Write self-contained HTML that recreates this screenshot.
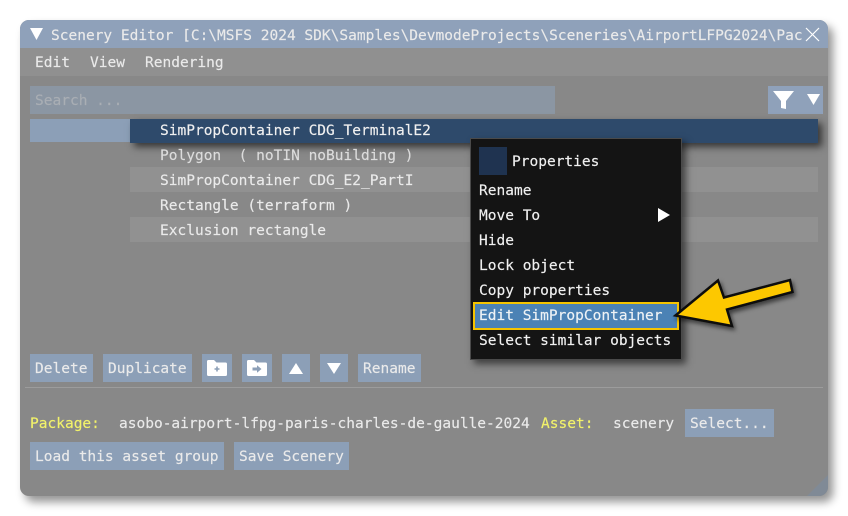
<!DOCTYPE html>
<html><head><meta charset="utf-8"><style>
html,body{margin:0;padding:0;background:#fff;width:848px;height:516px;overflow:hidden}
#r{position:relative;width:848px;height:516px;overflow:hidden;font-family:"DejaVu Sans Mono","Liberation Mono",monospace;font-size:14.52px;color:#eaeaea}
#r div{position:absolute;box-sizing:border-box}
.t{white-space:pre;height:20px;line-height:20px;margin-top:1px;-webkit-text-stroke:.15px currentColor}
.b{background:#8c9fb7;height:28px;top:354px}
svg{position:absolute;left:0;top:0}
</style></head><body><div id="r">
<div style="left:20px;top:20px;width:808px;height:476px;border-radius:9px;background:#888;box-shadow:5px 6px 9px rgba(0,0,0,.42);overflow:hidden">
<div style="left:0;top:0;width:808px;height:28px;background:#8fa1ba"></div>
<div style="left:0;top:28px;width:808px;height:28px;background:#909090"></div>
<div style="right:0;bottom:0;width:0;height:0;border-style:solid;border-width:0 0 21px 21px;border-color:transparent transparent #808a96 transparent"></div>
</div>
<div class="t" style="left:51px;top:25px;width:753px;overflow:hidden">Scenery Editor [C:\MSFS 2024 SDK\Samples\DevmodeProjects\Sceneries\AirportLFPG2024\Pac</div>
<div class="t" style="left:35px;top:52px">Edit</div>
<div class="t" style="left:90px;top:52px">View</div>
<div class="t" style="left:145px;top:52px">Rendering</div>
<div style="left:30px;top:86px;width:525px;height:28px;background:#8b96a3"></div>
<div class="t" style="left:35px;top:90px;color:#a9aeb4">Search ...</div>
<div style="left:768px;top:86px;width:55px;height:28px;background:#8fa1ba"></div>
<div style="left:30px;top:119px;width:100px;height:23px;background:#8c9fb7"></div>
<div style="left:130px;top:167px;width:688px;height:25px;background:#919191"></div>
<div style="left:130px;top:217px;width:688px;height:25px;background:#919191"></div>
<div style="left:130px;top:119px;width:688px;height:24px;background:#2e4a6b;box-shadow:4px 4px 7px rgba(0,0,0,.6)"></div>
<div class="t" style="left:160px;top:120px;color:#f0f0f0">SimPropContainer CDG_TerminalE2</div>
<div class="t" style="left:160px;top:145px;color:#dcdcdc">Polygon  ( noTIN noBuilding )</div>
<div class="t" style="left:160px;top:170px">SimPropContainer CDG_E2_PartI</div>
<div class="t" style="left:160px;top:195px">Rectangle (terraform )</div>
<div class="t" style="left:160px;top:220px">Exclusion rectangle</div>
<div class="b" style="left:30px;width:63px"></div>
<div class="t" style="left:35px;top:358px">Delete</div>
<div class="b" style="left:103px;width:89px"></div>
<div class="t" style="left:108px;top:358px">Duplicate</div>
<div class="b" style="left:202px;width:30px"></div>
<div class="b" style="left:242px;width:30px"></div>
<div class="b" style="left:282px;width:28px"></div>
<div class="b" style="left:320px;width:28px"></div>
<div class="b" style="left:358px;width:63px"></div>
<div class="t" style="left:363px;top:358px">Rename</div>
<div style="left:25px;top:387px;width:798px;height:1px;background:#9c9c9c"></div>
<div class="t" style="left:30px;top:413px;color:#f2f26a">Package:</div>
<div class="t" style="left:119px;top:413px">asobo-airport-lfpg-paris-charles-de-gaulle-2024</div>
<div class="t" style="left:541px;top:413px;color:#f2f26a">Asset:</div>
<div class="t" style="left:613px;top:413px">scenery</div>
<div class="b" style="left:685px;top:409px;width:89px"></div>
<div class="t" style="left:690px;top:413px">Select...</div>
<div class="b" style="left:30px;top:442px;width:194px"></div>
<div class="t" style="left:35px;top:446px">Load this asset group</div>
<div class="b" style="left:234px;top:442px;width:115px"></div>
<div class="t" style="left:239px;top:446px">Save Scenery</div>
<div style="left:470px;top:138px;width:212px;height:222px;background:#141414;border:1px solid #4a4a4a;box-shadow:4px 4px 7px rgba(0,0,0,.55)"></div>
<div style="left:479px;top:147px;width:28px;height:28px;background:#1f3350"></div>
<div class="t" style="left:512px;top:151px;color:#f0f0f0">Properties</div>
<div class="t" style="left:479px;top:180px;color:#f0f0f0">Rename</div>
<div class="t" style="left:479px;top:205px;color:#f0f0f0">Move To</div>
<div class="t" style="left:479px;top:230px;color:#f0f0f0">Hide</div>
<div class="t" style="left:479px;top:255px;color:#f0f0f0">Lock object</div>
<div class="t" style="left:479px;top:280px;color:#f0f0f0">Copy properties</div>
<div style="left:473px;top:302px;width:206px;height:28px;background:#4b82b5;border:2px solid #f5c400"></div>
<div class="t" style="left:479px;top:305px;color:#eef2f5">Edit SimPropContainer</div>
<div class="t" style="left:479px;top:330px;color:#f0f0f0">Select similar objects</div>
<svg width="848" height="516" viewBox="0 0 848 516">
<defs><filter id="s" x="-20%" y="-20%" width="150%" height="150%"><feDropShadow dx="2" dy="3" stdDeviation="2" flood-color="#000" flood-opacity=".55"/></filter></defs>
<path d="M30 28H43L36.500 40Z" fill="#fff"/>
<path d="M806 28L819 41M819 28L806 41" stroke="#fff" stroke-width="1.2" fill="none"/>
<path d="M773 91H794L786 101V109L781 108V101Z" fill="#fff"/>
<path d="M807 94H820L813.500 105Z" fill="#fff"/>
<path d="M658 208L670 215L658 222Z" fill="#fff"/>
<path d="M207 361.500Q207 360 208.500 360H214L216.500 362.500H225.500Q227 362.500 227 364V374.500Q227 376 225.500 376H208.500Q207 376 207 374.500Z" fill="#fff"/>
<path d="M214.500 369H219.500M217 366.500V371.500" stroke="#8c9fb7" stroke-width="1.6"/>
<path d="M247 361.500Q247 360 248.500 360H254L256.500 362.500H265.500Q267 362.500 267 364V374.500Q267 376 265.500 376H248.500Q247 376 247 374.500Z" fill="#fff"/>
<path d="M252.500 367.500H257V365.300L261.500 369L257 372.700V370.500H252.500Z" fill="#8c9fb7"/>
<path d="M289 374H303L296 363Z" fill="#fff"/>
<path d="M327 363H341L334 374Z" fill="#fff"/>
<path d="M675.500 315.500L718 280.500L724 297.500L790 280L792.500 292L727 309.500L732 326Z" fill="#fdc800" stroke="#111" stroke-width="2.500" stroke-linejoin="miter" filter="url(#s)"/>
</svg>
</div></body></html>
